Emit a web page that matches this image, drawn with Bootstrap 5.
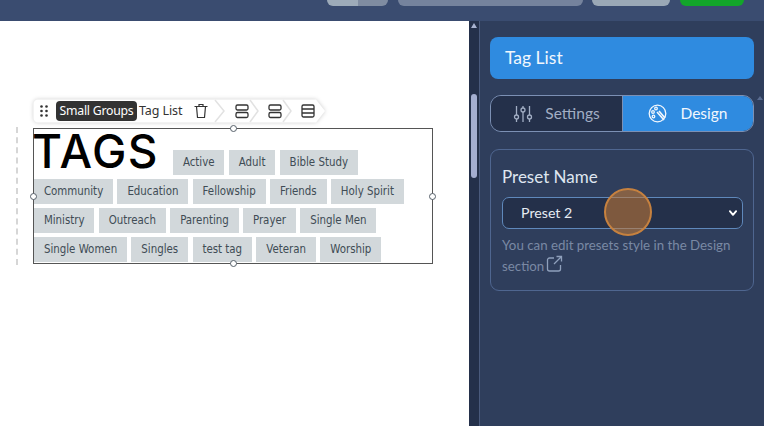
<!DOCTYPE html>
<html lang="en"><head><meta charset="utf-8"><title>Tag List</title>
<link href="https://cdn.jsdelivr.net/npm/bootstrap@5.3.0/dist/css/bootstrap.min.css" rel="stylesheet">
<style>
html,body{height:100%;overflow:hidden;background:#fff}
body{font-family:"Lato",sans-serif}
.app-top{height:21px;background:#3a4c70;padding-left:327px;gap:9.5px}
.tb{height:6px;border-radius:0 0 6px 6px;overflow:hidden;display:flex}
.tb i{display:block}
.tb1{width:61px}.tb1 i:first-child{width:31px;background:#9dabb9}.tb1 i:last-child{flex:1;background:#7f8ca1}
.tb2{width:185px;background:#75839d}
.tb3{width:78px;background:#9aa8b6}
.tb4{width:64px;background:#12a52a}
.app-main{height:405px}
.canvas{width:469px;background:#fff;position:relative;padding:107px 0 0 33px}
.dash{position:absolute;left:16px;top:106px;height:138px;border-left:2px dashed #d6d6d6}
.tools{position:absolute;left:33px;top:78px;height:24px;display:flex;align-items:center;font-size:13px;color:#333}
.tool-base{position:absolute;left:0;top:0;filter:drop-shadow(0 0 2px rgba(0,0,0,.2))}
.grip{position:absolute;left:7px;top:6px}
.sg{position:absolute;left:23px;top:2px;height:20px;line-height:20px;width:81px;text-align:center;background:#333;color:#fff;border-radius:4px;font-family:"Noto Sans",sans-serif;font-size:12.3px;letter-spacing:-.25px}
.tl{position:absolute;left:106px;top:2px;line-height:20px;font-family:"Noto Sans",sans-serif;font-size:12.5px;letter-spacing:-.1px;white-space:nowrap}
.ic{position:absolute;top:4px}
.selbox{width:400px;height:136px;border:1px solid #555;position:relative;display:flex;flex-wrap:wrap;align-content:flex-start;padding:0}
.hnd{position:absolute;width:7px;height:7px;border:1px solid #56606a;border-radius:50%;background:#fff}
.head{font-family:"Inter",sans-serif;font-size:46px;line-height:44px;height:46px;width:139px;margin-left:-2px;margin-right:2px;color:#000;letter-spacing:1.5px;font-weight:500;padding-top:0;margin-top:0;margin-bottom:0}
.chip{height:25px;line-height:24px;margin:0 4.4px 4px 0;padding:0 9.9px;background:#d2d8db;color:#404c55;font-family:"DejaVu Sans Condensed","DejaVu Sans",sans-serif;font-stretch:condensed;font-size:11.4px;white-space:nowrap}
.chip.first{margin-top:21px}
.rail{width:11px;background:#24304a;position:relative;border-right:1px solid #4a5a7c}
.rail .up{position:absolute;left:2px;top:2px;width:0;height:0;border:3px solid transparent;border-bottom:5px solid #a9b3d0;border-top:0}
.thumb{position:absolute;left:2px;top:73px;width:6px;height:84px;border-radius:3px;background:#a4aed0}
.side{flex:1;background:#2f3e5c;padding:16px 10px 0 10px;position:relative;color:#fff}
.title-bar{height:42px;background:#2f8be0;border-radius:8px;padding-left:15px;font-size:17.5px;line-height:41px;color:#f2f7fd}
.seg{height:37px;margin-top:16px;border:1px solid #7c90b4;border-radius:11px;overflow:hidden;display:flex;font-size:15.5px}
.seg>div{display:flex;align-items:center;justify-content:center}
.seg .off{width:132px;background:#24304a;color:#a2aec4;gap:12px;border-right:1px solid #7c90b4}
.seg .on{flex:1;background:#2f8be0;color:#f2f7fd;gap:13px}
.sc2{position:absolute;right:1px;top:75px;width:0;height:0;border:3px solid transparent;border-bottom:4px solid #5a6c90;border-top:0}
.panel{margin-top:17px;height:142px;border:1px solid #4f6690;border-radius:9px;padding:15px 10px 0 11px;background:#2f3e5c}
.plabel{font-size:17px;line-height:24px;color:#dfe6f0;margin-bottom:8px}
.form-select.psel{height:32px;background-color:#24304a;border:1.5px solid #5f88bb;border-radius:7px;color:#e6ebf2;font-size:14.2px;padding:0 0 0 18px;box-shadow:none;background-size:12px 10px;background-position:right 3px center;background-image:url("data:image/svg+xml,%3csvg xmlns='http://www.w3.org/2000/svg' viewBox='0 0 16 16'%3e%3cpath fill='none' stroke='%23fff' stroke-linecap='round' stroke-linejoin='round' stroke-width='3' d='m3 5 5 6 5-6'/%3e%3c/svg%3e")}
.hint{font-size:13.3px;line-height:20px;color:#7a89a4;margin-top:6px}
.pointer{position:absolute;left:124px;top:167px;width:48px;height:48px;border-radius:50%;border:2px solid #c6813f;background:rgba(201,124,52,.55);pointer-events:none}
</style></head>
<body>
<div class="app-top d-flex">
  <div class="tb tb1"><i></i><i></i></div><div class="tb tb2"></div><div class="tb tb3"></div><div class="tb tb4"></div>
</div>
<div class="app-main d-flex">
  <div class="canvas">
    <div class="dash"></div>
    <div class="tools">
      <svg class="tool-base" width="294" height="24" viewBox="0 0 294 24"><path d="M5 .5H283L292 12 283 23.5H5A4.500 4.500 0 0 1 .5 19V5A4.500 4.500 0 0 1 5 .5Z" fill="#fff"/><path d="M217 1l8 11-8 11M250 1l8 11-8 11" fill="none" stroke="#e2e2e2" stroke-width="1.500"/><path d="M182 1l9 11-9 11" fill="none" stroke="#e2e2e2" stroke-width="1.500"/></svg>
      <svg class="grip" width="8" height="12" viewBox="0 0 8 12" fill="#333"><circle cx="1.500" cy="1.500" r="1.300"/><circle cx="6.500" cy="1.500" r="1.300"/><circle cx="1.500" cy="6" r="1.300"/><circle cx="6.500" cy="6" r="1.300"/><circle cx="1.500" cy="10.500" r="1.300"/><circle cx="6.500" cy="10.500" r="1.300"/></svg>
      <span class="sg">Small Groups</span><span class="tl">Tag List</span>
      <svg class="ic" style="left:160px" width="16" height="16" viewBox="0 0 16 16" fill="none" stroke="#333" stroke-width="1.200"><path d="M1.500 3.500h13M6 3.500V1.500h4v2M3.500 3.500l1 11h7l1-11"/></svg>
      <svg class="ic" style="left:202px" width="14" height="16" viewBox="0 0 14 16" fill="none" stroke="#333" stroke-width="1.300"><rect x="1" y="2" width="12" height="5" rx="1.500"/><rect x="1" y="9.500" width="12" height="5" rx="1.500"/></svg>
      <svg class="ic" style="left:235px" width="14" height="16" viewBox="0 0 14 16" fill="none" stroke="#333" stroke-width="1.300"><rect x="1" y="2" width="12" height="5" rx="1.500"/><rect x="1" y="9.500" width="12" height="5" rx="1.500"/></svg>
      <svg class="ic" style="left:268px" width="14" height="16" viewBox="0 0 14 16" fill="none" stroke="#333" stroke-width="1.300"><rect x="1" y="2" width="12" height="12" rx="1.500"/><path d="M1 6h12M1 10h12"/></svg>
    </div>
    <div class="selbox">
      <span class="hnd" style="left:196px;top:-4px"></span><span class="hnd" style="left:-4px;top:64px"></span><span class="hnd" style="right:-4px;top:64px"></span><span class="hnd" style="left:196px;bottom:-4px"></span>
      <h1 class="head">TAGS</h1>
      <span class="chip first">Active</span><span class="chip first">Adult</span><span class="chip first">Bible Study</span>
      <span class="chip">Community</span><span class="chip">Education</span><span class="chip">Fellowship</span><span class="chip">Friends</span><span class="chip">Holy Spirit</span>
      <span class="chip">Ministry</span><span class="chip">Outreach</span><span class="chip">Parenting</span><span class="chip">Prayer</span><span class="chip">Single Men</span>
      <span class="chip">Single Women</span><span class="chip">Singles</span><span class="chip">test tag</span><span class="chip">Veteran</span><span class="chip">Worship</span>
    </div>
  </div>
  <div class="rail"><span class="up"></span><span class="thumb"></span></div>
  <div class="side">
    <div class="title-bar">Tag List</div>
    <div class="seg">
      <div class="off"><svg width="20" height="20" viewBox="0 0 20 20" fill="none" stroke="#a2aec4" stroke-width="1.300"><path d="M3.500 2v9M3.500 15v3M10 2v2M10 8v10M16.500 2v9M16.500 15v3"/><circle cx="3.500" cy="13" r="2"/><circle cx="10" cy="6" r="2"/><circle cx="16.500" cy="13" r="2"/></svg><span>Settings</span></div>
      <div class="on"><svg width="19" height="19" viewBox="0 0 19 19" fill="none" stroke="#f2f7fd" stroke-width="1.300"><circle cx="9.500" cy="9.500" r="8.300"/><circle cx="5" cy="8" r="1.300"/><circle cx="8" cy="4.500" r="1.300"/><circle cx="5.500" cy="12.500" r="1.300"/><path d="M9 8l7 8M11 7l6 7" stroke-width="1.600"/></svg><span>Design</span></div>
    </div>
    <span class="sc2"></span>
    <div class="panel">
      <div class="plabel">Preset Name</div>
      <select class="form-select psel"><option>Preset 2</option></select>
      <div class="hint">You can edit presets style in the Design section <svg width="17" height="17" viewBox="0 0 17 17" fill="none" stroke="#8fa0bc" stroke-width="1.300" style="vertical-align:-1px;margin-left:-2px"><path d="M8 3H3.500A2 2 0 0 0 1.500 5v9a2 2 0 0 0 2 2h9a2 2 0 0 0 2-2V10M10.500 1.500h5v5M15.500 1.500 8 9"/></svg></div>
    </div>
    <div class="pointer"></div>
  </div>
</div>
</body></html>
